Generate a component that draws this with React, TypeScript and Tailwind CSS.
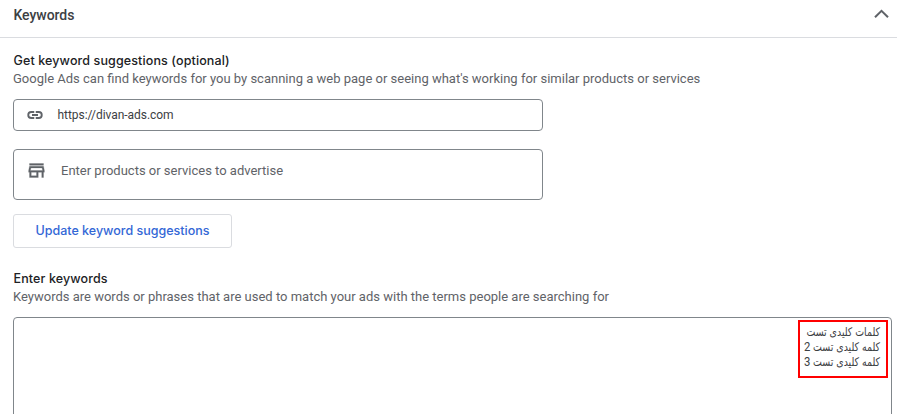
const keywords = [
  { text: 'کلمات کلیدی تست' },
  { text: 'کلمه کلیدی تست', index: 2 },
  { text: 'کلمه کلیدی تست', index: 3 },
];

export default function App() {
  return (
    <div className="h-[414px] overflow-hidden bg-white font-[Roboto,sans-serif] text-[13px] text-[#5f6368]">
      <header className="flex h-[38px] items-start justify-between border-b border-[#dadce0] pl-[13.5px] pr-[8px]">
        <h2 className="pt-[5px] text-[14px] leading-5 font-medium tracking-[-0.05px] text-[#3c4043]">
          Keywords
        </h2>
        <svg className="mt-[9px]" width="15" height="10" viewBox="0 0 15 10" fill="none">
          <path d="M1 8.3 7.5 1.8 14 8.3" stroke="currentColor" strokeWidth="2" />
        </svg>
      </header>

      <main className="pl-[13px] pr-[5px]">
        <section className="pt-[14px]">
          <SectionHeading
            title="Get keyword suggestions (optional)"
            description="Google Ads can find keywords for you by scanning a web page or seeing what's working for similar products or services"
          />
          <div className="mt-[11px] flex h-8 w-[530px] items-center rounded-[4px] border border-[#80868b] pl-3">
            <LinkIcon />
            <span className="ml-[13.5px] text-[12px] tracking-[-0.05px] text-[#3c4043]">
              https://divan-ads.com
            </span>
          </div>
          <div className="mt-[18px] flex h-[51px] w-[530px] items-start rounded-[4px] border border-[#80868b] pt-[10px] pl-3">
            <StoreIcon />
            <span className="ml-[14px] pt-px leading-5">
              Enter products or services to advertise
            </span>
          </div>
          <button className="mt-[14px] h-[34px] w-[219px] rounded-[3px] border border-[#dadce0] font-[Inter,sans-serif] text-[12.5px] font-medium text-[#3367d6]">
            Update keyword suggestions
          </button>
        </section>

        <section className="pt-[22px]">
          <SectionHeading
            title="Enter keywords"
            description="Keywords are words or phrases that are used to match your ads with the terms people are searching for"
          />
          <div className="mt-[11px] flex h-[120px] items-start justify-end rounded-[4px] border border-[#80868b] pt-[2px] pr-[3px]">
            <div
              dir="rtl"
              className="h-[58px] w-[90px] border-2 border-[#ff0000] pt-[2px] pr-[6px] font-['DejaVu_Sans_Condensed','DejaVu_Sans',sans-serif] text-[12px] whitespace-nowrap text-[#3c4043]"
            >
              {keywords.map(({ text, index }) => (
                <p
                  key={index ?? 1}
                  className="flex h-[15px] origin-right scale-x-[0.87] items-center gap-[3px]"
                >
                  <span>{text}</span>
                  {index && <span className="font-[Roboto,sans-serif] text-[13px]">{index}</span>}
                </p>
              ))}
            </div>
          </div>
        </section>
      </main>
    </div>
  );
}

function SectionHeading({ title, description }: { title: string; description: string }) {
  return (
    <div className="whitespace-nowrap">
      <h3 className="pl-[0.5px] font-[Inter,sans-serif] text-[12.5px] leading-[18px] font-medium tracking-[0.12px] text-[#202124]">
        {title}
      </h3>
      <p className="leading-[18px]">{description}</p>
    </div>
  );
}

function LinkIcon() {
  return (
    <svg width="18" height="18" viewBox="0 0 24 24" fill="none" stroke="currentColor" strokeWidth="2.5">
      <path d="M11 16H7a4 4 0 0 1 0-8h4M13 8h4a4 4 0 0 1 0 8h-4M8 12h8" />
    </svg>
  );
}

function StoreIcon() {
  return (
    <svg width="21" height="21" viewBox="0 0 24 24" fill="currentColor" stroke="currentColor" strokeWidth="0.3">
      <path d="M18.36 9l.6 3H5.04l.6-3h12.72M20 4H4v2h16V4zm0 3H4l-1 5v2h1v6h10v-6h4v6h2v-6h1v-2l-1-5zM6 18v-4h6v4H6z" />
    </svg>
  );
}
